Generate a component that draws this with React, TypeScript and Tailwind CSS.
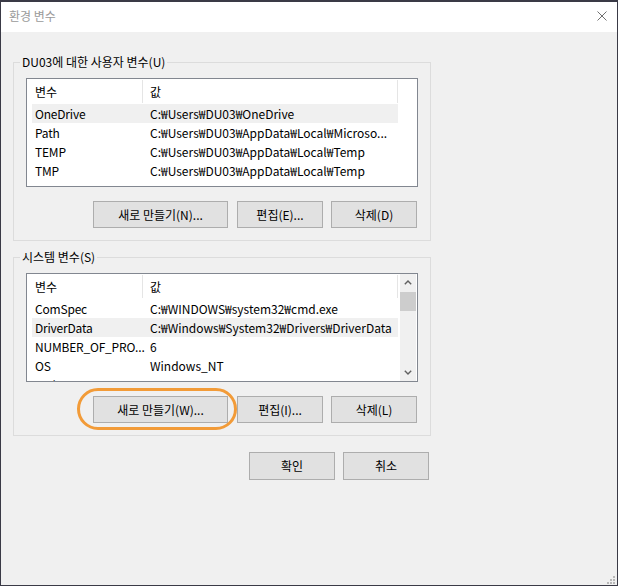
import { clsx } from "clsx";

const USER_ROWS = [
  ["OneDrive", "C:₩Users₩DU03₩OneDrive"],
  ["Path", "C:₩Users₩DU03₩AppData₩Local₩Microso..."],
  ["TEMP", "C:₩Users₩DU03₩AppData₩Local₩Temp"],
  ["TMP", "C:₩Users₩DU03₩AppData₩Local₩Temp"],
];

const SYSTEM_ROWS = [
  ["ComSpec", "C:₩WINDOWS₩system32₩cmd.exe"],
  ["DriverData", "C:₩Windows₩System32₩Drivers₩DriverData"],
  ["NUMBER_OF_PRO...", "6"],
  ["OS", "Windows_NT"],
  ["Path", "C:₩WINDOWS₩system32;C:₩WINDOWS;C:₩WIN..."],
];

function Chevron({ down }: { down?: boolean }) {
  return (
    <svg width="8" height="5" viewBox="0 0 8 5" fill="none">
      <path
        d={down ? "M0.8 0.8L4 4L7.2 0.8" : "M0.8 4.2L4 1L7.2 4.2"}
        stroke="#606060"
        strokeWidth="1.4"
      />
    </svg>
  );
}

function ScrollBar() {
  return (
    <div className="ml-auto mr-[1px] w-[16px] h-full bg-[#f0f0f0] flex flex-col shrink-0">
      <div className="h-[17px] flex items-center justify-center">
        <Chevron />
      </div>
      <div className="mt-[1px] h-[19px] bg-[#cdcdcd]" />
      <div className="flex-1" />
      <div className="h-[17px] flex items-center justify-center">
        <Chevron down />
      </div>
    </div>
  );
}

function VarList({
  rows,
  selected,
  scroll,
}: {
  rows: string[][];
  selected: number;
  scroll?: boolean;
}) {
  return (
    <div className="w-[392px] h-[109px] border border-[#828790] bg-white flex overflow-hidden">
      <div className="ml-[5px] w-[366px] flex flex-col shrink-0">
        <div className="h-[25px] flex shrink-0">
          <div className="w-[111px] pl-[3px] border-r border-[#e5e5e5] flex items-center my-[1px]">
            변수
          </div>
          <div className="w-[255px] pl-[7px] border-r border-[#e5e5e5] flex items-center my-[1px]">
            값
          </div>
        </div>
        {rows.map(([name, value], i) => (
          <div
            key={name + i}
            className={clsx(
              "h-[19px] flex items-center shrink-0 whitespace-nowrap",
              i === selected && "bg-[#f0f0f0]",
            )}
          >
            <span className="w-[111px] shrink-0 pl-[3px] tracking-[-0.2px]">
              {name}
            </span>
            <span className="flex-1 pl-[7px] overflow-hidden">{value}</span>
          </div>
        ))}
      </div>
      {scroll && <ScrollBar />}
    </div>
  );
}

function Btn({ label, w }: { label: string; w: string }) {
  return (
    <button
      className={clsx(
        "h-[27px] bg-[#e1e1e1] border border-[#adadad] flex items-center justify-center text-[12px] text-black",
        w,
      )}
    >
      {label}
    </button>
  );
}

function Group({
  label,
  children,
  className,
}: {
  label: string;
  children: React.ReactNode;
  className?: string;
}) {
  return (
    <fieldset
      className={clsx("w-[417px] border border-[#dcdcdc] m-0 p-0", className)}
    >
      <legend className="ml-[6px] px-[2px] leading-[16px] text-[12px] text-black">
        {label}
      </legend>
      <div className="px-[12px] pt-[8px] pb-[12px]">{children}</div>
    </fieldset>
  );
}

export default function App() {
  return (
    <div className="w-[618px] h-[586px] bg-[#3a3a46] pt-[2px] pl-[1px] font-['Noto_Sans_CJK_KR','Noto_Sans',sans-serif] text-[12px] text-black">
      <div className="relative w-[616px] h-[583px] flex flex-col bg-[#f0f0f0]">
        {/* title bar */}
        <div className="h-[30px] bg-white flex items-center justify-between pl-[8px] pr-[10px] pb-[2px] shrink-0">
          <span className="text-[12px] text-[#9a9a9a]">환경 변수</span>
          <svg width="10" height="10" viewBox="0 0 10 10">
            <path
              d="M0.5 0.5L9.5 9.5M9.5 0.5L0.5 9.5"
              stroke="#707070"
              strokeWidth="1"
            />
          </svg>
        </div>

        <div className="flex-1 pl-[12px] pt-[22px]">
          <Group label="DU03에 대한 사용자 변수(U)">
            <VarList rows={USER_ROWS} selected={0} />
            <div className="flex mt-[14px] ml-[67px]">
              <Btn label="새로 만들기(N)..." w="w-[135px]" />
              <div className="ml-[9px]">
                <Btn label="편집(E)..." w="w-[86px]" />
              </div>
              <div className="ml-[8px]">
                <Btn label="삭제(D)" w="w-[86px]" />
              </div>
            </div>
          </Group>

          <Group label="시스템 변수(S)" className="mt-[8px]">
            <VarList rows={SYSTEM_ROWS} selected={1} scroll />
            <div className="flex mt-[14px] ml-[67px]">
              <div className="relative">
                <Btn label="새로 만들기(W)..." w="w-[135px]" />
                <span className="absolute -left-[16px] -top-[8px] w-[160px] h-[42px] rounded-full border-[3px] border-[#f29b38] pointer-events-none" />
              </div>
              <div className="ml-[9px]">
                <Btn label="편집(I)..." w="w-[86px]" />
              </div>
              <div className="ml-[8px]">
                <Btn label="삭제(L)" w="w-[86px]" />
              </div>
            </div>
          </Group>

          <div className="w-[417px] flex justify-end gap-[8px] pr-[1px] mt-[16px]">
            <Btn label="확인" w="w-[86px] h-[28px]" />
            <Btn label="취소" w="w-[86px] h-[28px]" />
          </div>
        </div>

        {/* resize grip */}
        <svg
          className="absolute bottom-[1px] right-[2px]"
          width="8"
          height="8"
          viewBox="0 0 8 8"
        >
          <g fill="#b8b8b8">
            <rect x="6" y="0" width="2" height="2" />
            <rect x="3" y="3" width="2" height="2" />
            <rect x="6" y="3" width="2" height="2" />
            <rect x="0" y="6" width="2" height="2" />
            <rect x="3" y="6" width="2" height="2" />
            <rect x="6" y="6" width="2" height="2" />
          </g>
        </svg>
      </div>
    </div>
  );
}
